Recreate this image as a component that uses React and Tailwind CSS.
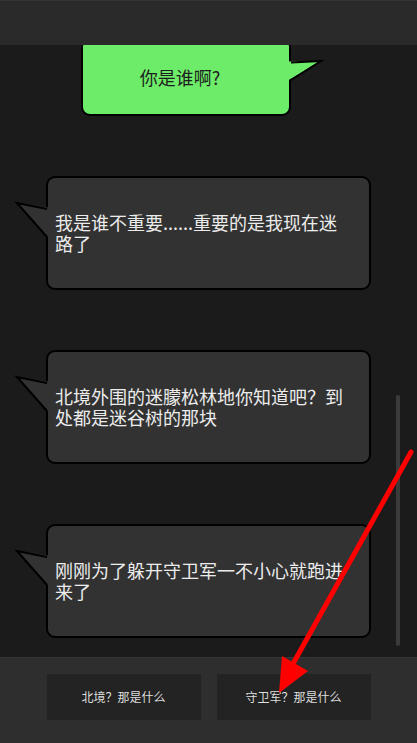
import React from "react";

const messages = [
  "我是谁不重要......重要的是我现在迷路了",
  "北境外围的迷朦松林地你知道吧？到处都是迷谷树的那块",
  "刚刚为了躲开守卫军一不小心就跑进来了",
];

const choices = ["北境？那是什么", "守卫军？那是什么"];

const GreenBubble = ({ text }) => (
  <div className="relative ml-[81px] mt-[-7px] flex h-[78px] w-[210px] items-center justify-center rounded-[9px] border-2 border-black bg-[#6dec69] pr-[12px]">
    <span className="text-[18px] leading-[21px] text-[#1e1e1e]">{text}</span>
    {/* tail on the right */}
    <svg className="absolute left-[204px] top-[16px]" width="40" height="30" viewBox="0 0 40 30">
      <polygon points="0,5.5 34,5 0,25" fill="#6dec69" />
      <polyline points="4,6.5 34,5 4,24" fill="none" stroke="#000" strokeWidth="2" strokeLinejoin="miter" />
    </svg>
  </div>
);

const GrayBubble = ({ text }) => (
  <div className="relative ml-[46px] mt-[60px] flex h-[114px] w-[325px] items-center rounded-[9px] border-2 border-black bg-[#323232] pl-[7px] pr-[22px]">
    <p className="text-[18px] leading-[21px] text-[#ececec]">{text}</p>
    {/* tail on the left */}
    <svg className="absolute left-[-34px] top-[-2px]" width="40" height="70" viewBox="0 0 40 70">
      <polygon points="35,31.5 3,27 35,62.5" fill="#323232" />
      <polyline points="33,33 3,27 33,61" fill="none" stroke="#000" strokeWidth="2" strokeLinejoin="miter" />
    </svg>
  </div>
);

export default function App() {
  return (
    <div className="relative flex h-[743px] w-[417px] flex-col overflow-hidden bg-[#1b1b1b] font-['Noto_Sans_CJK_SC',sans-serif]">
      <div className="relative z-10 h-[45px] shrink-0 border-t border-[#333] bg-[#2a2a2a]" />

      <div className="relative flex-1 overflow-hidden">
        <GreenBubble text="你是谁啊?" />
        {messages.map((m) => (
          <GrayBubble key={m} text={m} />
        ))}
        {/* scrollbar thumb */}
        <div className="absolute right-[17px] top-[350px] h-[251px] w-[4px] rounded-full bg-[#3b3b3b]" />
      </div>

      <div className="flex h-[86px] shrink-0 justify-center gap-[16px] border-t border-[#353535] bg-[#2e2e2e] pt-[16px]">
        {choices.map((c) => (
          <button
            key={c}
            className="flex h-[46px] w-[154px] items-center justify-center bg-[#232323] text-[12px] text-[#dedede]"
          >
            {c}
          </button>
        ))}
      </div>

      {/* red annotation arrow */}
      <svg className="pointer-events-none absolute left-0 top-0" width="417" height="743" viewBox="0 0 417 743">
        <line x1="411" y1="452" x2="294" y2="662" stroke="#ff0000" strokeWidth="5" strokeLinecap="round" />
        <polygon points="282,656 308,671 279,693" fill="#ff0000" />
      </svg>
    </div>
  );
}
